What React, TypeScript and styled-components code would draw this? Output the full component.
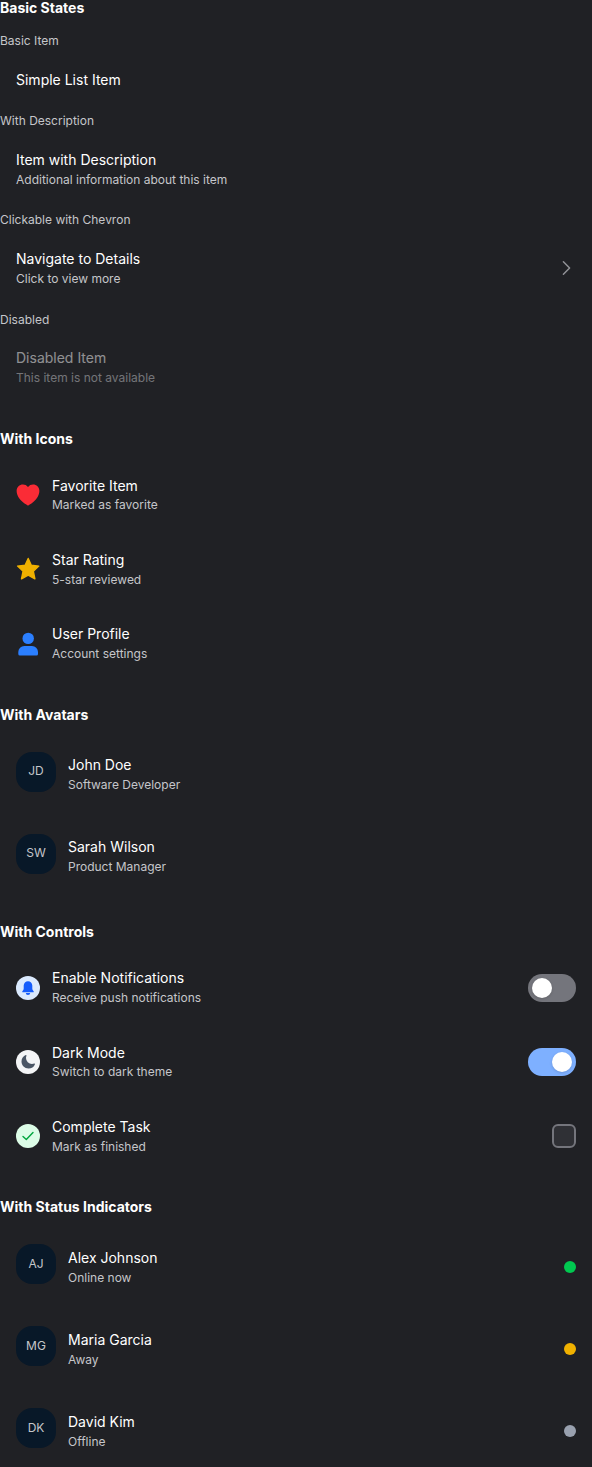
import React from "react";
import styled, { createGlobalStyle } from "styled-components";
import { HiHeart, HiMoon } from "react-icons/hi2";

const GlobalStyle = createGlobalStyle`
  * { box-sizing: border-box; }
  body {
    margin: 0;
    background: #202125;
    font-family: Inter, "Liberation Sans", sans-serif;
    color: #fff;
  }
`;

const Page = styled.main`
  display: flex;
  flex-direction: column;
  gap: 32px;
`;
const Section = styled.section`
  display: flex;
  flex-direction: column;
`;
const Heading = styled.h3`
  margin: 0 0 16px;
  font-size: 14px;
  line-height: 1.2;
  font-weight: 700;
`;
const Caption = styled.p`
  margin: 0 0 8px;
  font-size: 12px;
  line-height: 1.4;
  color: #c5c6ca;
`;
const Rows = styled.div`
  display: flex;
  flex-direction: column;
  gap: 12px;
`;
const Row = styled.div<{ $disabled?: boolean }>`
  display: flex;
  align-items: center;
  gap: 12px;
  padding: 12px 16px;
  opacity: ${(p) => (p.$disabled ? 0.5 : 1)};
`;
const Body = styled.div`
  flex: 1;
  min-width: 0;
`;
const Title = styled.div`
  font-size: 14px;
  line-height: 1.4;
`;
const Description = styled.div`
  margin-top: 2px;
  font-size: 12px;
  line-height: 1.4;
  color: #c5c6ca;
`;
const Avatar = styled.div`
  width: 40px;
  height: 40px;
  margin-bottom: 6px;
  padding-top: 0.3px;
  border-radius: 16px;
  background: #081828;
  color: #c5c6ca;
  font-size: 12px;
  line-height: 38px;
  text-align: center;
`;
const IconSlot = styled.div<{ $color: string; $bg?: string }>`
  width: 24px;
  height: 24px;
  display: flex;
  align-items: center;
  justify-content: center;
  border-radius: 50%;
  color: ${(p) => p.$color};
  background: ${(p) => p.$bg ?? "transparent"};

  svg {
    flex-shrink: 0;
  }
`;
const Switch = styled.div<{ $on?: boolean }>`
  display: flex;
  justify-content: ${(p) => (p.$on ? "flex-end" : "flex-start")};
  width: 48px;
  height: 28px;
  padding: 4px;
  border-radius: 14px;
  background: ${(p) => (p.$on ? "#7eb0ff" : "#74757c")};
`;
const Knob = styled.div`
  width: 20px;
  height: 20px;
  border-radius: 50%;
  background: #fff;
  box-shadow: 0 1px 3px rgba(0, 0, 0, 0.15);
`;
const Checkbox = styled.div`
  width: 24px;
  height: 24px;
  border: 2px solid #74757c;
  border-radius: 6px;
  background: #2f3035;
`;
const Dot = styled.div<{ $color: string }>`
  width: 12px;
  height: 12px;
  border-radius: 50%;
  background: ${(p) => p.$color};
`;

type ItemProps = {
  title: string;
  description?: string;
  start?: React.ReactNode;
  end?: React.ReactNode;
  disabled?: boolean;
};

const ListItem = ({ title, description, start, end, disabled }: ItemProps) => (
  <Row $disabled={disabled}>
    {start}
    <Body>
      <Title>{title}</Title>
      {description && <Description>{description}</Description>}
    </Body>
    {end}
  </Row>
);

const Chevron = () => (
  <svg width="20" height="20" viewBox="0 0 20 20" fill="none" stroke="#919297" strokeWidth="1.5" strokeLinecap="round" strokeLinejoin="round">
    <path d="M7.4 3.8 13.6 10l-6.2 6.2" />
  </svg>
);
const StarIcon = () => (
  <svg width="24" height="24" viewBox="0 0 24 24" fill="currentColor" stroke="currentColor" strokeWidth="1.4" strokeLinejoin="round">
    <path d="M12.2 1.5 15.3 8.3l7.5.8-5.5 5.1 1.6 7.6-6.7-3.700-6.700 3.700 1.600-7.600-5.500-5.100 7.500-.8Z" />
  </svg>
);
const UserIcon = () => (
  <svg width="24" height="24" viewBox="0 0 24 24" fill="currentColor">
    <circle cx="12.2" cy="6.4" r="5.7" />
    <path d="M8.3 14H16a6 6 0 0 1 6 6v1.9a1.5 1.5 0 0 1-1.5 1.5H3.8a1.5 1.5 0 0 1-1.5-1.5V20a6 6 0 0 1 6-6Z" />
  </svg>
);
const BellIcon = () => (
  <svg width="14" height="14" viewBox="0 0 14 14" fill="currentColor">
    <path d="M7 .2a4.3 4.3 0 0 0-4.3 4.3v2.9c0 .8-.2 1.3-.6 1.9l-.7.9c-.4.5-.1 1 .4 1h10.4c.5 0 .8-.5.4-1l-.7-.9c-.4-.6-.6-1.1-.6-1.9V4.5A4.3 4.3 0 0 0 7 .2Z" />
    <path d="M4.8 12h4.4a2.2 1.9 0 0 1-4.4 0Z" />
  </svg>
);
const CheckIcon = () => (
  <svg width="12" height="12" viewBox="0 0 12 12" fill="none" stroke="currentColor" strokeWidth="1.4" strokeLinecap="round" strokeLinejoin="round">
    <path d="M1 6.4 4.3 9.6 11 2.4" />
  </svg>
);

export default function App() {
  return (
    <>
      <GlobalStyle />
      <Page>
        <Section>
          <Heading>Basic States</Heading>
          <Rows>
            <div>
              <Caption>Basic Item</Caption>
              <ListItem title="Simple List Item" />
            </div>
            <div>
              <Caption>With Description</Caption>
              <ListItem title="Item with Description" description="Additional information about this item" />
            </div>
            <div>
              <Caption>Clickable with Chevron</Caption>
              <ListItem title="Navigate to Details" description="Click to view more" end={<Chevron />} />
            </div>
            <div>
              <Caption>Disabled</Caption>
              <ListItem title="Disabled Item" description="This item is not available" disabled />
            </div>
          </Rows>
        </Section>
        <Section>
          <Heading>With Icons</Heading>
          <Rows>
            <ListItem start={<IconSlot $color="#fb2c36"><HiHeart size={28} /></IconSlot>} title="Favorite Item" description="Marked as favorite" />
            <ListItem start={<IconSlot $color="#f0b100"><StarIcon /></IconSlot>} title="Star Rating" description="5-star reviewed" />
            <ListItem start={<IconSlot $color="#2b7fff"><UserIcon /></IconSlot>} title="User Profile" description="Account settings" />
          </Rows>
        </Section>
        <Section>
          <Heading>With Avatars</Heading>
          <Rows>
            <ListItem start={<Avatar>JD</Avatar>} title="John Doe" description="Software Developer" />
            <ListItem start={<Avatar>SW</Avatar>} title="Sarah Wilson" description="Product Manager" />
          </Rows>
        </Section>
        <Section>
          <Heading>With Controls</Heading>
          <Rows>
            <ListItem start={<IconSlot $color="#155dfc" $bg="#dbeafe"><BellIcon /></IconSlot>} title="Enable Notifications" description="Receive push notifications" end={<Switch><Knob /></Switch>} />
            <ListItem start={<IconSlot $color="#4a5565" $bg="#f3f4f6"><HiMoon size={16} /></IconSlot>} title="Dark Mode" description="Switch to dark theme" end={<Switch $on><Knob /></Switch>} />
            <ListItem start={<IconSlot $color="#00a63e" $bg="#dcfce7"><CheckIcon /></IconSlot>} title="Complete Task" description="Mark as finished" end={<Checkbox />} />
          </Rows>
        </Section>
        <Section>
          <Heading>With Status Indicators</Heading>
          <Rows>
            <ListItem start={<Avatar>AJ</Avatar>} title="Alex Johnson" description="Online now" end={<Dot $color="#00c950" />} />
            <ListItem start={<Avatar>MG</Avatar>} title="Maria Garcia" description="Away" end={<Dot $color="#f0b100" />} />
            <ListItem start={<Avatar>DK</Avatar>} title="David Kim" description="Offline" end={<Dot $color="#99a1af" />} />
          </Rows>
        </Section>
      </Page>
    </>
  );
}
